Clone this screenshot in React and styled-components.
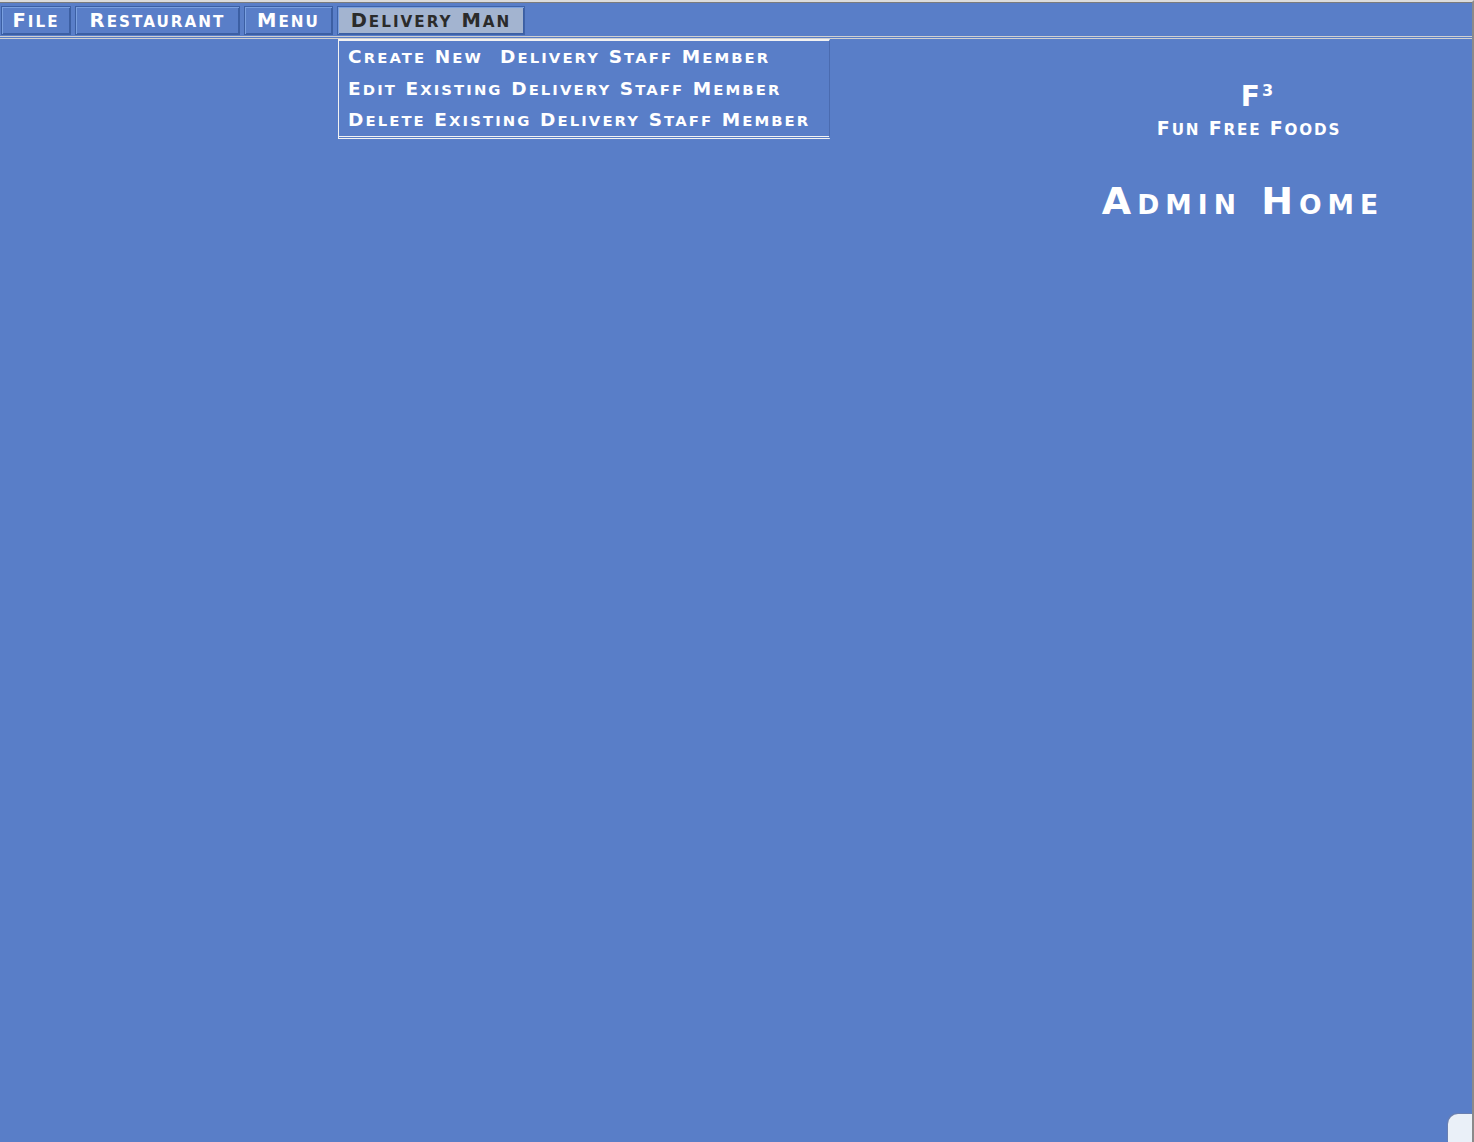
import React from "react";
import styled, { createGlobalStyle } from "styled-components";

const Global = createGlobalStyle`
  html, body {
    margin: 0;
    padding: 0;
    background: #597ec8;
  }
  #root {
    height: 1142px;
  }
`

const Page = styled.div`
  position: relative;
  height: 1142px;
  background: #597ec8;
  border-top: 2px solid #dcdcdc;
  border-right: 2px solid #8a8a8a;
  box-sizing: border-box;
  font-family: "DejaVu Sans", "Verdana", sans-serif;
  font-weight: bold;
  color: #ffffff;
  overflow: hidden;
  &:before {
    content: "";
    display: block;
    height: 1px;
    background: #7c7c7c;
  }
`

// copperplate style small caps: lowercase runs drawn as smaller capitals
const Small = styled.span`
  font-size: ${p => p.$ratio}em;
`

const SmallCaps = ({ text, ratio = 0.8 }) => (
  <span>
    {text.split(/([a-z]+)/).map((part, i) =>
      /^[a-z]+$/.test(part) ? (
        <Small key={i} $ratio={ratio}>{part.toUpperCase()}</Small>
      ) : (
        part
      )
    )}
  </span>
)

const MenuBar = styled.div`
  display: flex;
  gap: 4px;
  padding: 3px 0 0 1px;
  height: 30px;
  border-bottom: 3px double #d0d0d0;
  position: relative;
`

const MenuItem = styled.div`
  box-sizing: border-box;
  width: ${p => p.$w}px;
  height: 29px;
  display: flex;
  align-items: center;
  justify-content: center;
  font-size: 19.5px;
  letter-spacing: 2px;
  white-space: pre;
  border: 1px solid ${p => (p.$open ? "#3f63a8" : "#3c5fa3")};
  box-shadow: inset 1px 1px 0 #7aa0e0, inset -1px -1px 0 #3c5fa3;
  background: ${p => (p.$open ? "#a3b4d0" : "#597ec8")};
  color: ${p => (p.$open ? "#2b2b2b" : "#ffffff")};
`

const Dropdown = styled.div`
  position: absolute;
  top: 37px;
  left: 338px;
  width: 492px;
  box-sizing: border-box;
  background: #597ec8;
  border-top: 2px solid #f2f2f2;
  border-left: 1px solid #f2f2f2;
  border-right: 1px solid #4a6bb0;
  border-bottom: 3px double #f2f2f2;
  padding: 0 0 0 9px;
  display: flex;
  flex-direction: column;
`

const DropItem = styled.div`
  font-size: 18.5px;
  height: 31.5px;
  line-height: 31px;
  letter-spacing: 2.1px;
  white-space: pre;
`

const Content = styled.div`
  display: flex;
  justify-content: flex-end;
  padding-right: 62px;
`

const Brand = styled.div`
  width: 330px;
  display: flex;
  flex-direction: column;
  align-items: center;
  padding-top: 42px;
`

const Logo = styled.div`
  font-size: 28px;
  line-height: 32px;
  margin-left: 24px;
  sup {
    font-size: 16px;
    line-height: 0;
    vertical-align: 10px;
    margin-left: 2px;
  }
`

const Tagline = styled.div`
  font-size: 19px;
  line-height: 24px;
  margin-top: 3px;
  margin-left: 8px;
  letter-spacing: 1.8px;
`

const Title = styled.h1`
  margin: 37px 0 0 -4px;
  font-size: 38px;
  line-height: 44px;
  font-weight: bold;
  letter-spacing: 6px;
`

const Corner = styled.div`
  position: absolute;
  right: 0;
  bottom: 0;
  width: 24px;
  height: 28px;
  background: #eaf0f8;
  border-top-left-radius: 10px;
  box-shadow: -1px -1px 0 #6a7fb0;
`

const menus = [
  { name: "File", w: 70 },
  { name: "Restaurant", w: 165 },
  { name: "Menu", w: 89 },
  { name: "Delivery Man", w: 188, open: true },
]

const staffOptions = [
  "Create New  Delivery Staff Member",
  "Edit Existing Delivery Staff Member",
  "Delete Existing Delivery Staff Member",
]

export default function App() {
  return (
    <>
      <Global />
      <Page>
        <MenuBar>
          {menus.map(m => (
            <MenuItem key={m.name} $w={m.w} $open={m.open}>
              <SmallCaps text={m.name} ratio={0.78} />
            </MenuItem>
          ))}
        </MenuBar>
        <Dropdown>
          {staffOptions.map(o => (
            <DropItem key={o}>
              <SmallCaps text={o} />
            </DropItem>
          ))}
        </Dropdown>
        <Content>
          <Brand>
            <Logo>
              F<sup>3</sup>
            </Logo>
            <Tagline>
              <SmallCaps text="Fun Free Foods" />
            </Tagline>
            <Title>
              <SmallCaps text="Admin Home" ratio={0.7} />
            </Title>
          </Brand>
        </Content>
        <Corner />
      </Page>
    </>
  );
}
